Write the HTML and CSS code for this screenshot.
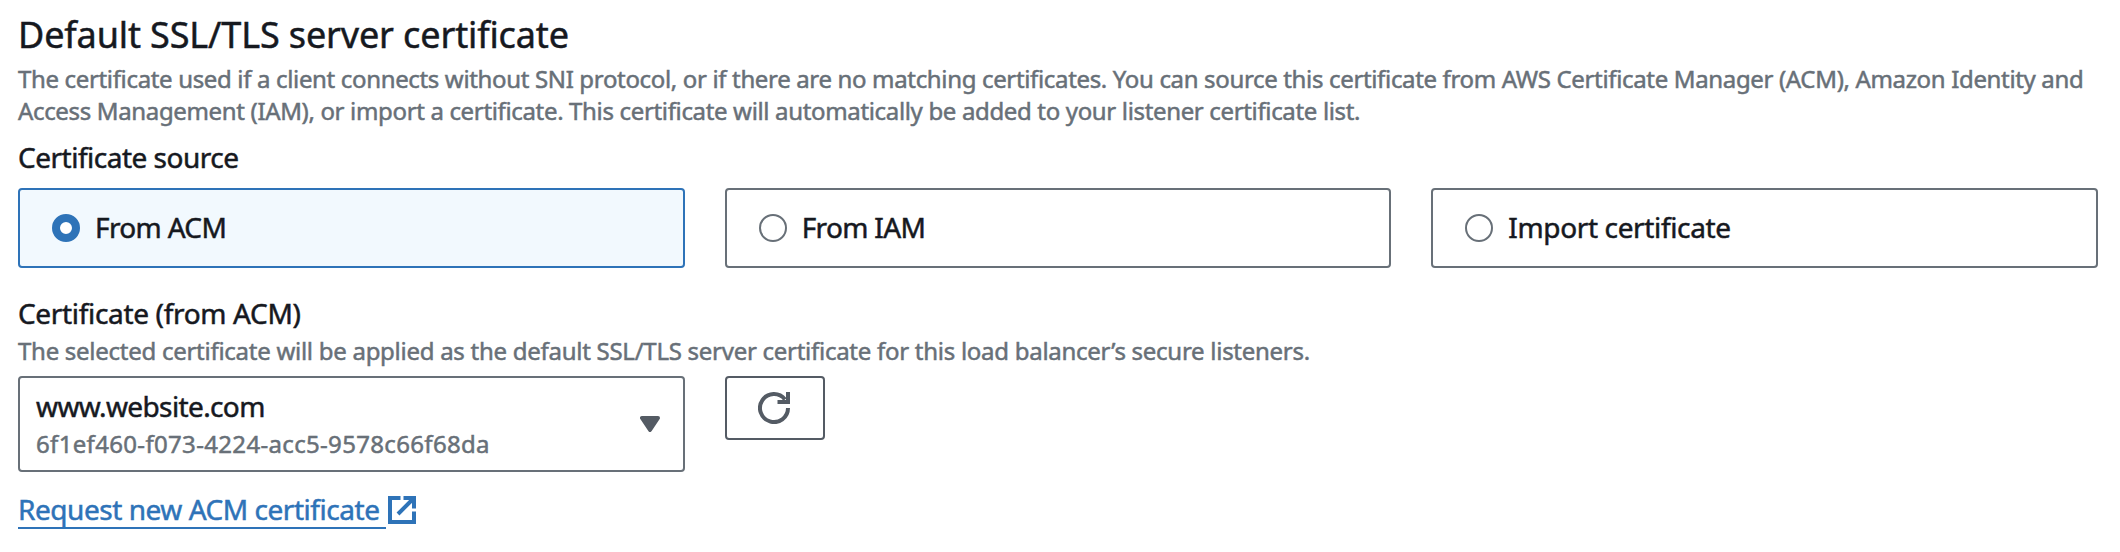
FILE: index.html
```html
<!DOCTYPE html>
<html lang="en">
<head>
<meta charset="utf-8">
<title>Default SSL/TLS server certificate</title>
<link rel="stylesheet" href="styles.css">
</head>
<body>
<main class="panel">
  <h2 class="title">Default SSL/TLS server certificate</h2>
  <p class="description">The certificate used if a client connects without SNI protocol, or if there are no matching certificates. You can source this certificate from AWS Certificate Manager (ACM), Amazon Identity and<br>Access Management (IAM), or import a certificate. This certificate will automatically be added to your listener certificate list.</p>

  <div class="label label-source">Certificate source</div>
  <div class="tiles">
    <div class="tile tile-selected"><span class="radio radio-checked"></span><span class="tile-text tile-text-short">From ACM</span></div>
    <div class="tile"><span class="radio"></span><span class="tile-text tile-text-short">From IAM</span></div>
    <div class="tile"><span class="radio"></span><span class="tile-text">Import certificate</span></div>
  </div>

  <div class="label label-certificate">Certificate (from ACM)</div>
  <p class="hint">The selected certificate will be applied as the default SSL/TLS server certificate for this load balancer’s secure listeners.</p>
  <div class="picker">
    <div class="select">
      <div class="select-value">
        <div class="domain">www.website.com</div>
        <div class="cert-id">6f1ef460-f073-4224-acc5-9578c66f68da</div>
      </div>
      <svg class="caret" width="20" height="16" viewBox="0 0 20 16"><path d="M2 2H18L10 14Z" fill="#545b64" stroke="#545b64" stroke-width="4" stroke-linejoin="round"/></svg>
    </div>
    <button class="refresh" type="button" aria-label="Refresh">
      <svg width="32" height="32" viewBox="0 0 32 32" fill="none" stroke="#545b64" stroke-width="4"><path d="M30 16A14 14 0 1 1 27 7.4"/><path d="M30 0V10H19.5"/></svg>
    </button>
  </div>

  <a class="link"><span class="link-text">Request new ACM certificate</span><svg class="external" width="28" height="28" viewBox="0 0 28 28" fill="none" stroke="#2e73b8" stroke-width="4"><path d="M12.5 2H2V26H26V15.5"/><path d="M15.5 2H26V12.5M26 2L10 18"/></svg></a>
</main>
</body>
</html>
```
FILE: styles.css
```css
* { box-sizing: border-box; }
body {
  margin: 0;
  background: #fff;
  color: #16191f;
  font-family: "Noto Sans", "Open Sans", sans-serif;
  font-size: 28px;
  -webkit-text-stroke: 0.5px currentColor;
}
.panel { padding: 13px 22px 0 18px; }
.title {
  margin: 0;
  font-size: 36px;
  font-weight: 400;
  line-height: 44px;
  letter-spacing: -0.13px;
}
.description, .hint {
  margin: 0;
  color: #687078;
  font-size: 24px;
  line-height: 32px;
  white-space: nowrap;
}
.description { margin-top: 6px; letter-spacing: -0.342px; }
.hint { margin-top: 2px; letter-spacing: -0.27px; }
.label { line-height: 40px; }
.label-source { margin-top: 10px; letter-spacing: -0.5px; }
.label-certificate { margin-top: 25px; letter-spacing: -0.33px; }
.tiles {
  display: grid;
  grid-template-columns: repeat(3, 1fr);
  gap: 40px;
  margin-top: 11px;
}
.tile {
  display: flex;
  align-items: center;
  gap: 15px;
  height: 80px;
  padding: 0 32px;
  border: 2px solid #687078;
  border-radius: 4px;
  letter-spacing: -0.36px;
}
.tile-selected { border-color: #2e73b8; background: #f2f9fe; }
.tile-text { padding-bottom: 2px; line-height: 38px; }
.tile-text-short { letter-spacing: -0.65px; }
.radio {
  width: 28px;
  height: 28px;
  border: 2px solid #687078;
  border-radius: 50%;
  background: #fff;
}
.radio-checked { border: 8px solid #2e73b8; }
.picker {
  display: grid;
  grid-template-columns: repeat(3, 1fr);
  gap: 40px;
  align-items: start;
  margin-top: 9px;
}
.select {
  display: flex;
  align-items: center;
  justify-content: space-between;
  height: 96px;
  padding: 0 23px 0 16px;
  border: 2px solid #687078;
  border-radius: 4px;
}
.domain { line-height: 36px; letter-spacing: -0.62px; }
.cert-id {
  margin-top: 4px;
  color: #687078;
  font-size: 24px;
  line-height: 32px;
  letter-spacing: 0.33px;
}
.refresh {
  display: flex;
  align-items: center;
  justify-content: center;
  width: 100px;
  height: 64px;
  padding: 0 2px 0 0;
  border: 2px solid #545b64;
  border-radius: 4px;
  background: #fff;
}
.link {
  display: flex;
  align-items: flex-start;
  gap: 2px;
  margin-top: 19px;
  color: #2e73b8;
}
.link-text {
  width: 368px;
  line-height: 36px;
  border-bottom: 2px solid #2e73b8;
  letter-spacing: -0.46px;
  white-space: nowrap;
}
.external { margin-top: 5px; }
```
